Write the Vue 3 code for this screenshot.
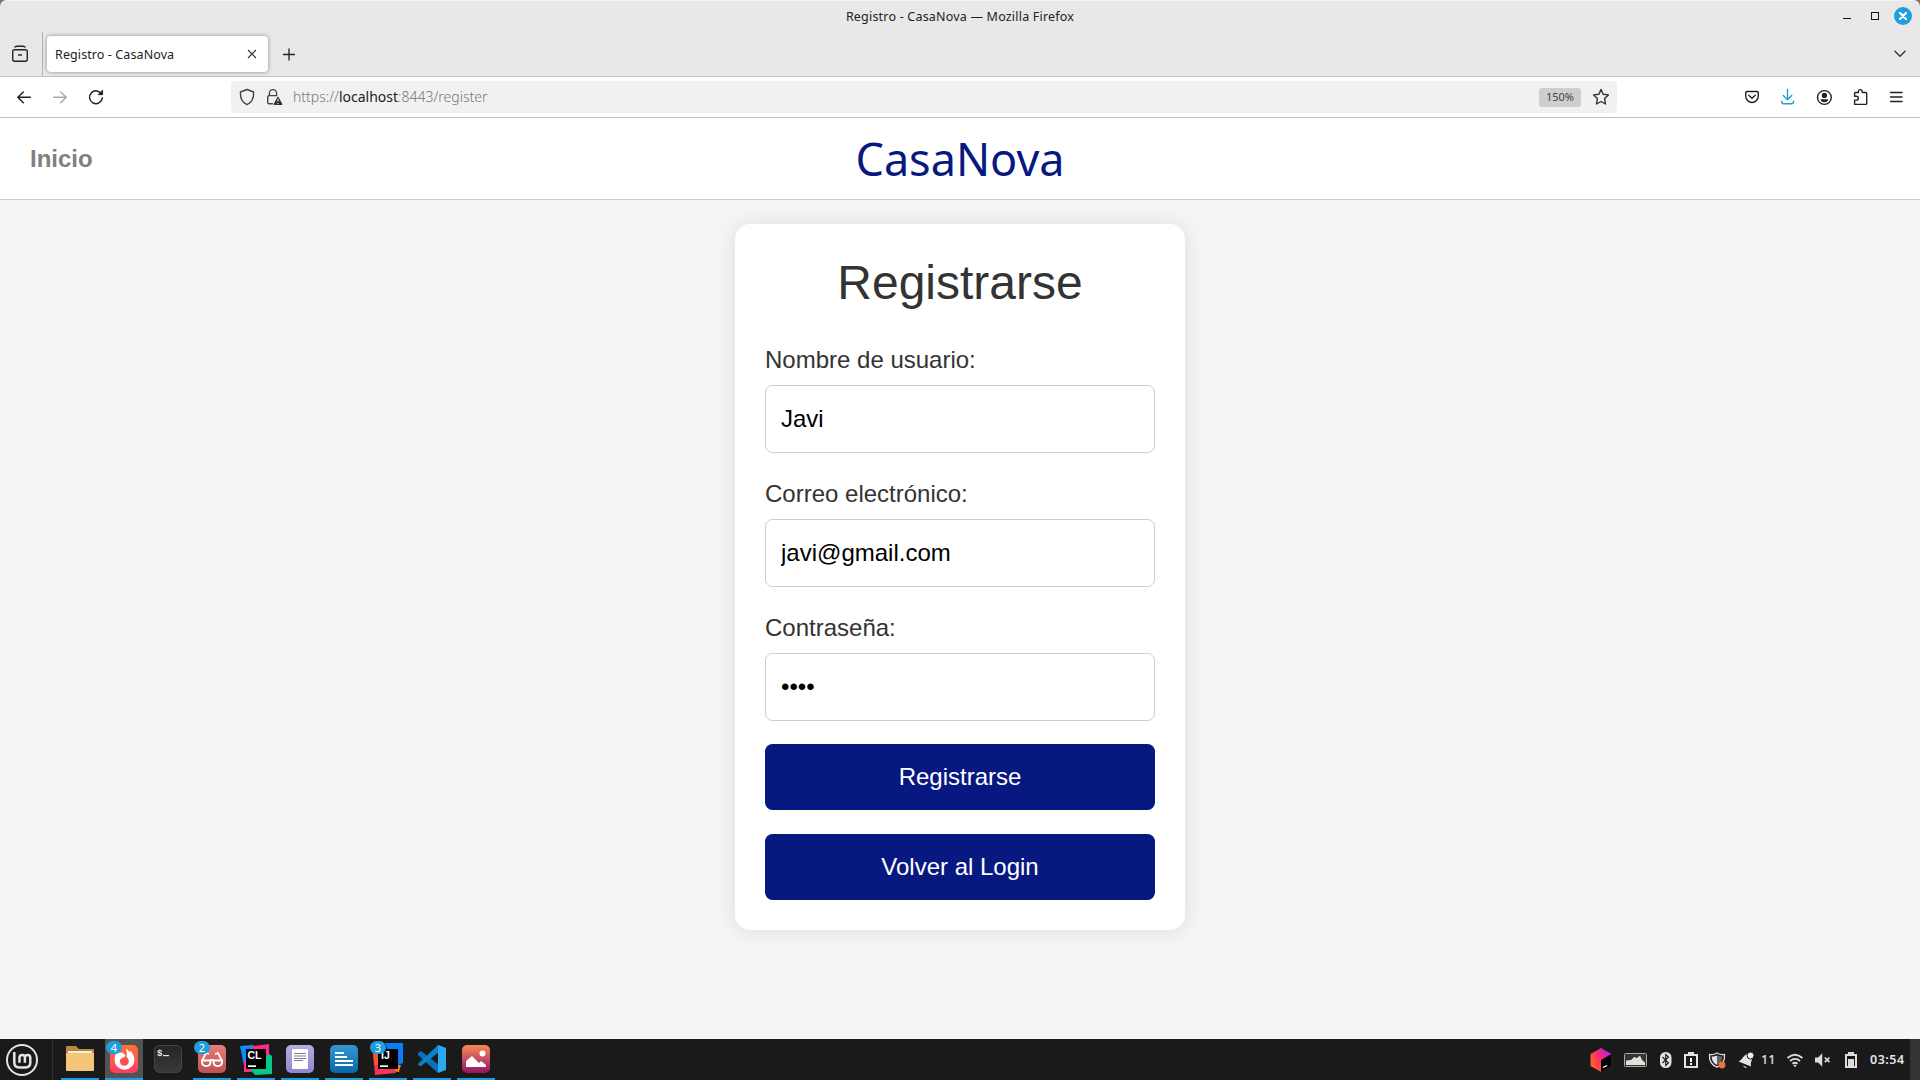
<script setup>
import { ref } from 'vue'

const fields = ref([
  { id: 'username', label: 'Nombre de usuario:', type: 'text', value: 'Javi' },
  { id: 'email', label: 'Correo electrónico:', type: 'text', value: 'javi@gmail.com' },
  { id: 'password', label: 'Contraseña:', type: 'password', value: '1234' },
])
</script>

<template>
  <div class="screen">
    <div class="chrome">
      <div class="titlebar">
        <div class="side"></div>
        <span class="title">Registro - CasaNova — Mozilla Firefox</span>
        <div class="side controls">
          <svg width="84" height="28" viewBox="1836 0 84 28">
            <path d="M1843 18h8v1h-8z" fill="#111" />
            <rect x="1871.5" y="12.5" width="7" height="7" fill="none" stroke="#111" />
            <circle cx="1903" cy="16" r="9" fill="#1f9ede" />
            <path d="M1900 13l6 6M1906 13l-6 6" stroke="#fff" stroke-width="2.2" stroke-linecap="round" />
          </svg>
        </div>
      </div>
      <div class="tabs">
        <svg class="view" width="42" height="44" viewBox="0 32 42 44" fill="none" stroke="#222" stroke-width="1.4" stroke-linecap="round">
          <rect x="12.7" y="49.7" width="14.6" height="11.6" rx="2" />
          <path d="M15 47q1-.8 2-.8h6q1 0 2 .8M18.6 55h2.8" />
        </svg>
        <div class="tab">
          <span>Registro - CasaNova</span>
          <svg width="10" height="10" viewBox="0 0 10 10" stroke="#333" stroke-width="1.1"><path d="M1 1l8 8M9 1l-8 8" /></svg>
        </div>
        <svg class="plus" width="12" height="12" viewBox="0 0 12 12" stroke="#222" stroke-width="1.3"><path d="M0 6.500h12M6 .5v12" /></svg>
        <svg class="chev" width="12" height="8" viewBox="0 0 12 8" fill="none" stroke="#333" stroke-width="1.3"><path d="M.5.8L6 6.3 11.5.8" /></svg>
      </div>
      <div class="toolbar">
        <svg class="nav" width="231" height="40" viewBox="0 77 231 40" fill="none" stroke="#222" stroke-width="1.5" stroke-linecap="round" stroke-linejoin="round">
          <path d="M30.3 97.3H18M23.3 92l-5.5 5.3 5.5 5.4" />
          <path d="M53.7 97.3H66M60.7 92l5.5 5.3-5.5 5.4" stroke="#aaa" />
          <path d="M101.7 94.4a6.4 6.4 0 1 0 .6 3.7" />
          <path d="M102.6 90.6v4h-4z" fill="#222" stroke-width="1" />
        </svg>
        <div class="url">
          <svg width="62" height="32" viewBox="231 81 62 32" fill="none" stroke="#444" stroke-width="1.4" stroke-linejoin="round">
            <path d="M247 89.5l6.6 2.500c.3 5.500-1.2 10.300-6.6 12.700-5.400-2.400-6.900-7.200-6.600-12.700z" />
            <path d="M273 103.8h-3.8q-1.5 0-1.5-1.5v-5.2q0-1.5 1.5-1.5h8.1M269.4 95.5v-2.3a3.6 3.6 0 0 1 7.2 0v2.3" />
            <path d="M278 97.6l3.7 6.7h-7.4z" fill="#333" stroke="#333" />
            <path d="M278 99v2.5M278 103v.9" stroke="#f0f0f0" stroke-width="1.1" />
          </svg>
          <span class="address">https://<b>localhost</b>:8443/register</span>
          <span class="zoom">150%</span>
          <svg class="star" width="18" height="18" viewBox="0 0 18 18" fill="none" stroke="#333" stroke-width="1.4" stroke-linejoin="round">
            <path d="M9 1.5l2.1 4.8 5.3.6-3.8 3.7.9 5.4L9 13.5 4.5 16l.9-5.4L1.6 6.9l5.3-.6z" />
          </svg>
        </div>
        <svg class="tools" width="190" height="40" viewBox="1730 77 190 40" fill="none" stroke="#222" stroke-width="1.4" stroke-linecap="round" stroke-linejoin="round">
          <path d="M1747 91.5h10q1.3 0 1.3 1.3v3a6.3 6.8 0 0 1-12.6 0v-3q0-1.3 1.3-1.3zM1748.8 95.3l3.2 3 3.2-3" />
          <path d="M1787.5 89.5v10.2M1783.3 95.5l4.2 4.3 4.2-4.3M1781.6 101.3q0 2.4 2 2.4h8q2 0 2-2.4" stroke="#1f9ede" />
          <circle cx="1824.4" cy="97.500" r="6.9" />
          <circle cx="1824.4" cy="95.400" r="2.6" fill="#222" stroke="none" />
          <path d="M1820.4 99.2h8q-.7 3-4 3t-4-3z" fill="#222" stroke="none" />
          <path d="M1854.6 104.2v-4.100h1.800a1.900 1.900 0 0 0 0-3.800h-1.800v-3q0-.8.8-.8h3v-1a1.900 1.900 0 0 1 3.800 0v1h3.500q1 0 1 1v9.900q0 1-1 1h-10.100q-1 0-1-1z" />
          <path d="M1890.5 92.5h11.5M1890.5 97h11.5M1890.5 101.5h11.5" />
        </svg>
      </div>
    </div>

    <div class="page">
      <header class="site">
        <a class="home">Inicio</a>
        <span class="brand">CasaNova</span>
        <span class="balance"></span>
      </header>
      <main>
        <form class="card" @submit.prevent>
          <h1>Registrarse</h1>
          <template v-for="f in fields" :key="f.id">
            <label :for="f.id">{{ f.label }}</label>
            <input :id="f.id" v-model="f.value" :type="f.type" />
          </template>
          <button type="submit">Registrarse</button>
          <button type="button">Volver al Login</button>
        </form>
      </main>
    </div>

    <footer class="taskbar">
      <div class="start">
        <svg width="34" height="34" viewBox="0 0 34 34" fill="none" stroke="#e4e4e4">
          <circle cx="17" cy="17" r="15" stroke-width="2" />
          <path d="M9.3 9v10.500q0 5 5 5h6q5 0 5-5v-4.800a2.700 2.700 0 0 0-5.400 0v5.100M19.900 19v-4.300a2.700 2.700 0 0 0-5.400 0v5.100" stroke-width="2.500" />
        </svg>
      </div>
      <div class="apps">
        <div class="app open">
          <svg viewBox="0 0 32 32"><path d="M2 4q0-1 1-1h9l3 3h14q1 0 1 1v8H2z" fill="#b98a3c" /><path d="M4 8h24v4H4z" fill="#eee" /><path d="M2 10h28v17q0 1-1 1H3q-1 0-1-1z" fill="#f7c577" /></svg>
        </div>
        <div class="app open active">
          <svg viewBox="0 0 32 32">
            <defs><linearGradient id="fx" x2="0" y2="1"><stop stop-color="#ff7139" /><stop offset="1" stop-color="#ff3b63" /></linearGradient></defs>
            <rect x="2" y="2" width="28" height="28" rx="5" fill="url(#fx)" />
            <path d="M7.500 11.500q1.500-3 3.500-4.500l.5 3q2-.8 3.500 0l2.500 2.500q-1 2-3.500 2.500l-1.500 1a4.500 4.500 0 1 0 8.300 1.500q-.3-2.500-2.300-3.500 1-4-.5-8.500 2 1 3.500 4 .5-1.200.3-2.300 4.700 4.300 4.700 9.800a10 9.700 0 0 1-20 0q0-3 1-5.500z" fill="#fff" />
          </svg>
          <span class="badge">4</span>
        </div>
        <div class="app">
          <svg viewBox="0 0 32 32"><defs><linearGradient id="tm" x2="0" y2="1"><stop stop-color="#252525" /><stop offset="1" stop-color="#3a3a3a" /></linearGradient></defs><rect x="2.500" y="2.500" width="27" height="27" rx="5" fill="url(#tm)" stroke="#444" /><text x="5" y="12.500" font-size="9" font-weight="700" fill="#e8e8e8" font-family="Liberation Mono, monospace">$</text><path d="M11 12h6v1.200h-6z" fill="#e8e8e8" /></svg>
        </div>
        <div class="app open">
          <svg viewBox="0 0 32 32"><defs><linearGradient id="gl" x2="0" y2="1"><stop stop-color="#e77c79" /><stop offset="1" stop-color="#bd5353" /></linearGradient></defs><rect x="2" y="2" width="28" height="28" rx="5" fill="url(#gl)" /><g fill="none" stroke="#fff" stroke-width="1.800"><path d="M6 18l4-8 3 1M26 18l-4-8-3 1M13 18q3-2 6 0" /><path d="M6 17.500h8.500v1.500q0 4-4.200 4T6 19zM17.500 17.500H26V19q0 4-4.200 4t-4.300-4z" /></g></svg>
          <span class="badge">2</span>
        </div>
        <div class="app open">
          <svg viewBox="0 0 32 32"><path d="M0 3l13-1 7 5-13 16H4z" fill="#078efc" /><path d="M13 3l16-2v14L11 29H4V20z" fill="#fe2c87" /><path d="M29 11l3 2v18l-17 1-5-6z" fill="#07c88b" /><path d="M6 6h20v20H6z" fill="#000" /><text x="7.500" y="16" class="glyph">CL</text><path d="M8 22.300h8V24H8z" fill="#fff" /></svg>
        </div>
        <div class="app open">
          <svg viewBox="0 0 32 32"><defs><linearGradient id="dc" x2="0" y2="1"><stop stop-color="#b7aee2" /><stop offset="1" stop-color="#9285ca" /></linearGradient></defs><rect x="2" y="2" width="28" height="28" rx="5" fill="url(#dc)" /><rect x="8" y="6" width="16" height="20" rx="1" fill="#fff" /><path d="M10 10.500h12M10 13h12M10 15.500h12M10 17.500h9" stroke="#81799d" /></svg>
        </div>
        <div class="app open">
          <svg viewBox="0 0 32 32"><defs><linearGradient id="ln" x2="0" y2="1"><stop stop-color="#3696ce" /><stop offset="1" stop-color="#0869aa" /></linearGradient></defs><rect x="2" y="2" width="28" height="28" rx="5" fill="url(#ln)" /><path d="M7 10h9M7 14h12M7 18h18M7 22h18" stroke="#fff" stroke-width="2" /></svg>
        </div>
        <div class="app open">
          <svg viewBox="0 0 32 32"><path d="M13 0h18v20l-9 4z" fill="#087cfa" /><path d="M18 22h11l-2 7-11-1z" fill="#f97a12" /><path d="M1 8l7-5v20l14-1 2 8-21 2z" fill="#fe315d" /><path d="M1 8l10-7v20l-9 1z" fill="#f8542d" /><path d="M6 6h20v20H6z" fill="#000" /><text x="9" y="16" class="glyph">IJ</text><path d="M8 22.300h8V24H8z" fill="#fff" /></svg>
          <span class="badge">3</span>
        </div>
        <div class="app open">
          <svg viewBox="0 0 32 32"><path d="M2 10l3-2 18 14-1 8L2 12z" fill="#0872b7" /><path d="M2 21l20-19 1 7L5 23l-3-1z" fill="#0a83cb" /><path d="M22 2l8 3v22l-8 3z" fill="#2da8ef" /></svg>
        </div>
        <div class="app open">
          <svg viewBox="0 0 32 32"><defs><linearGradient id="im" x2="0" y2="1"><stop stop-color="#f48a51" /><stop offset=".55" stop-color="#c44862" /><stop offset="1" stop-color="#90165f" /></linearGradient></defs><rect x="2" y="2" width="28" height="28" rx="5" fill="url(#im)" /><circle cx="22.500" cy="10.500" r="3" fill="#fff" /><path d="M6 24v-6l6-5 7 7 2-2 5 4v2z" fill="#fff" /></svg>
        </div>
      </div>
      <div class="tray">
        <svg width="178" height="41" viewBox="1580 1039 178 41">
          <defs><linearGradient id="jb" x1="0" y1=".7" x2="1" y2=".2"><stop stop-color="#ff6a24" /><stop offset=".45" stop-color="#ff2d64" /><stop offset="1" stop-color="#a21ff5" /></linearGradient></defs>
          <path d="M1601 1048l10.500 6v12l-10.500 6-10.500-6v-12z" fill="url(#jb)" />
          <path d="M1601 1060l10.500-6v12l-10.500 6z" fill="#000" />
          <path d="M1603 1067.500l4-2" stroke="#fff" stroke-width="1.300" />
          <rect x="1624.500" y="1053.500" width="22" height="13" rx="1" fill="#333" stroke="#aaa" />
          <path d="M1626 1065v-4.500l5-.5 3-3 3 1 3-2.500 2 4.500 3 2.500v2.500z" fill="#e4e0d8" />
          <rect x="1660" y="1052" width="11.500" height="16" rx="5.500" fill="#e2e2e2" />
          <path d="M1662.500 1057l6 6-2.800 2.500v-11l2.800 2.500-6 6" fill="none" stroke="#1a1a1a" stroke-width="1.100" />
          <path d="M1685 1055h12v12h-12z" fill="none" stroke="#e2e2e2" stroke-width="2" />
          <path d="M1688 1052h6v4h-6z" fill="#e2e2e2" /><path d="M1690 1058h2v4h-2zM1690 1063h2v2h-2z" fill="#fff" />
          <path d="M1717 1053c2.500 1.500 5 2 7.500 1.500.5 6-2 10.500-7.500 12.700-5.500-2.200-8-6.700-7.500-12.700 2.500.5 5 0 7.500-1.500z" fill="#222" stroke="#ddd" stroke-width="1.300" />
          <path d="M1717 1055.500v9.500c-3.500-1.800-5.300-4.500-5.300-8.500 2 0 3.500-.2 5.300-1z" fill="#e2e2e2" /><path d="M1717 1055.500v9.500c3.500-1.800 5.300-4.500 5.300-8.500-2 0-3.500-.2-5.300-1z" fill="#666" />
          <circle cx="1722" cy="1065" r="3.400" fill="#f07138" />
          <path d="M1738.500 1061.500c3.500-1 4.500-6 8.500-7.500 1 3 2.500 5 5 5-.5 2.500-1.500 3.500-1 7.500z" fill="#e2e2e2" />
          <circle cx="1750.500" cy="1055.500" r="3.500" fill="#f2f2f2" stroke="#1a1a1a" stroke-width="1" /><path d="M1743 1065.500l4 2q-2.500 1.500-4-2z" fill="#e2e2e2" />
        </svg>
        <span class="count">11</span>
        <svg width="84" height="41" viewBox="1780 1039 84 41" fill="none" stroke="#ddd">
          <path d="M1787.500 1058q7.500-6.500 15 0M1790 1061q5-4.200 10 0M1792.500 1063.700q2.500-2 5 0" stroke-width="1.800" /><path d="M1793.300 1065.300q1.700-1.200 3.400 0l-1.700 2z" fill="#ddd" stroke="none" />
          <path d="M1815 1057.500h3.200l4-4.300v13.600l-4-4.300h-3.200z" fill="#ddd" stroke="none" /><path d="M1824.800 1057.500l4.700 4.700M1829.500 1057.500l-4.700 4.700" stroke-width="1.700" />
          <path d="M1846 1055h10v12h-10z" stroke-width="2" /><path d="M1848 1052h6v3h-6zM1848 1059h6v7h-6z" fill="#ddd" stroke="none" />
        </svg>
        <span class="clock">03:54</span>
        <div class="corner"></div>
      </div>
    </footer>
  </div>
</template>

<style>
body {
  margin: 0;
  background: #1a1a1a;
}
</style>

<style scoped>
.screen {
  width: 1920px;
  height: 1080px;
  display: flex;
  flex-direction: column;
  overflow: hidden;
  font-family: "Liberation Sans", Arial, sans-serif;
  background: #777;
}
svg {
  display: block;
  flex: none;
}
.chrome {
  font-family: "Noto Sans", sans-serif;
  color: #222;
  background: #e8e8e8;
  border-radius: 7px 7px 0 0;
  box-shadow: inset 0 1px #f3f3f3;
}
.titlebar {
  height: 32px;
  display: flex;
  align-items: flex-start;
}
.side {
  flex: 1;
}
.controls {
  display: flex;
  justify-content: flex-end;
}
.title {
  font-size: 12.5px;
  letter-spacing: 0.2px;
  line-height: 33px;
  color: #222;
}
.tabs {
  height: 44px;
  display: flex;
  align-items: center;
  border-bottom: 1px solid #c3c3c3;
}
.view {
  border-right: 1px solid #b3b3b3;
}
.tab {
  width: 221px;
  height: 36px;
  box-sizing: border-box;
  margin-left: 4px;
  padding: 0 11px 0 8px;
  display: flex;
  align-items: center;
  justify-content: space-between;
  background: #fff;
  border-radius: 4px;
  box-shadow: 0 0 4px rgba(0, 0, 0, 0.4);
  font-size: 12.5px;
  letter-spacing: 0.1px;
}
.plus {
  margin-left: 15px;
  overflow: visible;
}
.chev {
  margin-left: auto;
  margin-right: 14px;
}
.toolbar {
  height: 40px;
  display: flex;
  align-items: center;
  background: #fff;
  border-bottom: 1px solid #c3c3c3;
}
.url {
  width: 1386px;
  height: 32px;
  display: flex;
  align-items: center;
  background: #f1f1f1;
  border-radius: 4px;
}
.address {
  padding-bottom: 1px;
  font-size: 14px;
  font-weight: 300;
  color: #777;
}
.address b {
  font-weight: 400;
  color: #222;
}
.zoom {
  width: 42px;
  height: 19px;
  margin-left: auto;
  background: #cecece;
  border-radius: 3px;
  font-size: 11px;
  line-height: 18px;
  text-align: center;
  color: #444;
}
.star {
  margin: 0 7px 0 11px;
}
.tools {
  margin-left: auto;
}
.page {
  flex: 1;
  background: #f5f5f5;
}
.site {
  height: 81px;
  display: flex;
  align-items: center;
  padding: 0 30px;
  background: #fff;
  border-bottom: 1px solid #ccc;
}
.home,
.balance {
  flex: 1;
  font-size: 24px;
  font-weight: 700;
  color: #808080;
}
.brand {
  font-family: "Noto Sans", sans-serif;
  font-size: 45px;
  line-height: 80px;
  color: #071980;
}
.card {
  width: 450px;
  height: 706px;
  box-sizing: border-box;
  margin: 24px auto 0;
  padding: 30px;
  display: flex;
  flex-direction: column;
  background: #fff;
  border-radius: 15px;
  box-shadow: 0 1px 22px rgba(0, 0, 0, 0.1);
}
.card > * {
  flex: none;
}
h1 {
  margin: 0 0 30px;
  font-size: 48px;
  line-height: 58px;
  font-weight: 400;
  text-align: center;
  color: #333;
}
label {
  height: 28px;
  margin: 4px 0 11px;
  font-size: 24px;
  line-height: 28px;
  color: #333;
}
input {
  height: 68px;
  box-sizing: border-box;
  margin: 0 0 23px;
  padding: 0 15px;
  border: 1px solid #ccc;
  border-radius: 7.5px;
  font: 24px "Liberation Sans", Arial, sans-serif;
  color: #000;
  background: #fff;
  outline: none;
}
button {
  height: 66px;
  margin: 0 0 24px;
  padding: 0;
  border: 0;
  border-radius: 7.5px;
  font: 24px "Liberation Sans", Arial, sans-serif;
  color: #fff;
  background: #071980;
}
.taskbar {
  height: 41px;
  display: flex;
  background: #1a1a1a;
  color: #e4e4e4;
}
.start {
  width: 53px;
  display: flex;
  align-items: center;
  box-sizing: border-box;
  padding: 1px 0 0 5px;
  border-right: 1px solid #303030;
}
.apps {
  display: flex;
  gap: 6px;
  margin-left: 8px;
}
.app {
  position: relative;
  width: 38px;
  height: 41px;
  box-sizing: border-box;
  padding: 4px 3px 0;
}
.app svg {
  width: 32px;
  height: 32px;
}
.open {
  border-bottom: 2px solid #1f9ede;
}
.active {
  background: #535353;
}
.badge {
  position: absolute;
  left: 1px;
  top: 2px;
  width: 16px;
  height: 13px;
  border-radius: 7px;
  background: #1f9ede;
  color: #fff;
  font: 11px/13px "Noto Sans", sans-serif;
  text-align: center;
}
.glyph {
  font: 700 10.5px "Liberation Sans", sans-serif;
  fill: #fff;
}
.tray {
  margin-left: auto;
  display: flex;
  align-items: center;
  font-family: "Noto Sans", sans-serif;
}
.count {
  width: 22px;
  box-sizing: border-box;
  padding-left: 3px;
  font-size: 12.5px;
  font-weight: 500;
}
.clock {
  width: 46px;
  box-sizing: border-box;
  padding-left: 6px;
  font-size: 12.5px;
  font-weight: 600;
  letter-spacing: 0.5px;
}
.corner {
  width: 10px;
  height: 41px;
  background: #333;
}
</style>
